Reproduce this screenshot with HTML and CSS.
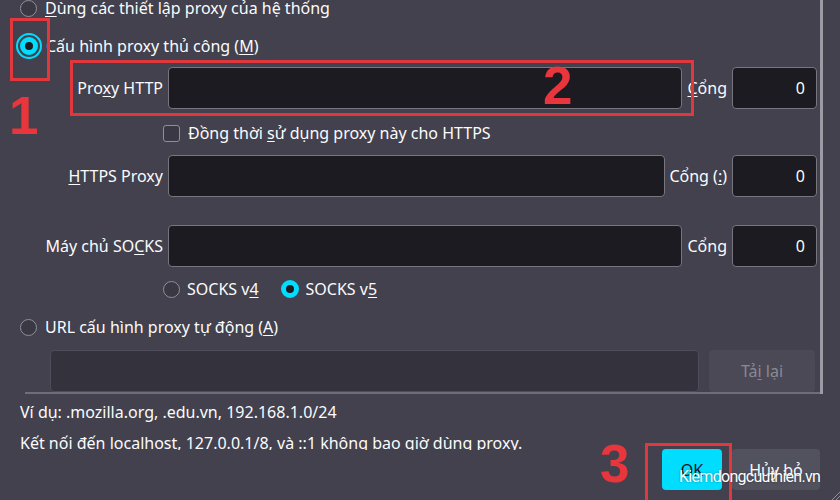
FILE: index.html
```html
<!DOCTYPE html>
<html lang="vi">
<head>
<meta charset="utf-8">
<title>Cài đặt proxy</title>
<link rel="stylesheet" href="styles.css">
</head>
<body>
<div class="dialog">
  <div class="scroll">
    <div class="panel">
      <div class="opt r1"><span class="radio"></span><span><u>D</u>ùng các thiết lập proxy của hệ thống</span></div>
      <div class="opt r2"><span class="radio checked focus"></span><span>Cấu hình proxy thủ công (<u>M</u>)</span></div>

      <div class="field r-http">
        <label class="lbl">Pro<u>x</u>y HTTP</label>
        <div class="input"></div>
        <label class="plbl"><u>C</u>ổng</label>
        <div class="input port">0</div>
      </div>

      <div class="opt r-check"><span class="check"></span><span>Đồng thời <u>s</u>ử dụng proxy này cho HTTPS</span></div>

      <div class="field r-https">
        <label class="lbl"><u>H</u>TTPS Proxy</label>
        <div class="input"></div>
        <label class="plbl">Cổng (<u>:</u>)</label>
        <div class="input port">0</div>
      </div>

      <div class="field r-socks">
        <label class="lbl">Máy chủ SO<u>C</u>KS</label>
        <div class="input"></div>
        <label class="plbl">Cổn<u>g</u></label>
        <div class="input port">0</div>
      </div>

      <div class="opt r-ver">
        <span class="radio"></span><span class="ver">SOCKS v<u>4</u></span>
        <span class="radio checked"></span><span>SOCKS v<u>5</u></span>
      </div>

      <div class="opt r-url"><span class="radio"></span><span>URL cấu hình proxy tự động (<u>A</u>)</span></div>

      <div class="r-urlinput">
        <div class="input disabled"></div>
        <button class="reload">Tả<u>i</u> lại</button>
      </div>
      <div class="divider"></div>
    </div>
    <p class="note n1">Ví dụ: .mozilla.org, .edu.vn, 192.168.1.0/24</p>
    <p class="note n2">Kết nối đến localhost, 127.0.0.1/8, và ::1 không bao giờ dùng proxy.</p>
  </div>
  <div class="footer">
    <button class="btn primary">OK</button>
    <button class="btn">Hủy bỏ</button>
  </div>

  <div class="mark box1"></div>
  <div class="mark box2"></div>
  <div class="mark box3"></div>
  <div class="num n-1">1</div>
  <div class="num n-2">2</div>
  <div class="num n-3">3</div>
  <div class="watermark">Kiemdongcuuthien.vn</div>
  <svg class="grip" width="8" height="10" viewBox="0 0 8 10"><path d="M8 2 L0 10 M8 6 L4 10" stroke="#8f8f9d" stroke-width="1"/></svg>
</div>
</body>
</html>
```

FILE: styles.css
```css
html, body {
  margin: 0;
  padding: 0;
}
body {
  background: #42414d;
  color: #fbfbfe;
  font-family: "Noto Sans", "Open Sans", sans-serif;
  font-size: 16px;
  width: 840px;
  height: 500px;
  overflow: hidden;
}
u { text-decoration: underline; text-underline-offset: 2px; }

.dialog {
  position: relative;
  width: 840px;
  height: 500px;
  overflow: hidden;
}
.scroll {
  height: 450px;
  overflow: hidden;
}
.panel {
  width: 823px;
  box-sizing: border-box;
  border-right: 3px solid #9c9ba4;
  margin-top: -4px;
}

.opt {
  display: flex;
  align-items: center;
  height: 24px;
  white-space: nowrap;
}
.r1, .r2, .r-url { padding-left: 20px; gap: 8px; }
.r2 { margin-top: 14px; }

.radio {
  flex: none;
  width: 17px;
  height: 17px;
  box-sizing: border-box;
  border-radius: 50%;
  border: 1px solid #8f8f9d;
  background: #3a3943;
}
.radio.checked {
  background: #1c1b22;
  border: 5px solid #00ddff;
  width: 18px;
  height: 18px;
}
.radio.focus {
  outline: 2px solid #00ddff;
  outline-offset: 2px;
}

.field {
  display: flex;
  align-items: center;
  gap: 5px;
  height: 42px;
  width: 817px;
}
.r-http { margin-top: 9px; }
.r-https { margin-top: 10px; }
.r-https .plbl { margin-left: -1px; }
.r-socks { margin-top: 28px; }

.lbl {
  width: 163px;
  flex: none;
  text-align: right;
  white-space: nowrap;
}
.plbl { flex: none; white-space: nowrap; }

.input {
  flex: 1;
  height: 42px;
  box-sizing: border-box;
  background: #1c1b22;
  border: 1px solid #77767f;
  border-radius: 4px;
}
.input.port {
  flex: none;
  width: 85px;
  text-align: right;
  padding-right: 11px;
  line-height: 40px;
}

.r-check { margin-top: 12px; padding-left: 163px; gap: 8px; }
.check {
  flex: none;
  width: 17px;
  height: 17px;
  box-sizing: border-box;
  border: 1px solid #8f8f9d;
  border-radius: 3px;
  background: #3a3943;
}

.r-ver { margin-top: 10px; padding-left: 163px; gap: 7px; }
.r-ver .ver { margin-right: 15px; }

.r-url { margin-top: 14px; }

.r-urlinput {
  display: flex;
  gap: 10px;
  margin-top: 11px;
  padding-left: 50px;
  width: 815px;
  box-sizing: border-box;
  height: 42px;
}
.input.disabled {
  background: #34323d;
  border-color: #4e4c58;
}
.reload {
  flex: none;
  width: 106px;
  height: 42px;
  border: none;
  border-radius: 4px;
  background: #4a4955;
  color: #8a8993;
  font-family: inherit;
  font-size: 16px;
  padding: 0;
}

.divider {
  margin-left: 25px;
  height: 2px;
  background: #6e6d78;
}

.note {
  margin: 0;
  padding-left: 20px;
  height: 22px;
  line-height: 22px;
  white-space: nowrap;
}
.n1 { margin-top: 7px; }
.n2 { margin-top: 9px; }

.footer {
  display: flex;
  justify-content: flex-end;
  gap: 10px;
  padding-right: 20px;
  margin-top: -1px;
}
.btn {
  height: 41px;
  border: none;
  border-radius: 4px;
  background: #52515e;
  color: #fbfbfe;
  font-family: inherit;
  font-size: 16px;
  padding: 0;
  width: 88px;
}
.btn.primary {
  background: #00ddff;
  color: #15141a;
  width: 60px;
}

.mark {
  position: absolute;
  border: 3px solid #e0383d;
  box-sizing: border-box;
}
.box1 { left: 10px; top: 18px; width: 40px; height: 63px; }
.box2 { left: 70px; top: 60px; width: 624px; height: 56px; }
.box3 { left: 645px; top: 443px; width: 87px; height: 62px; }

.num {
  position: absolute;
  color: #e8363c;
  font-family: "Liberation Sans", Arial, sans-serif;
  font-weight: bold;
  font-size: 53px;
  line-height: 1;
}
.n-1 { left: 9px; top: 89px; }
.n-2 { left: 543px; top: 59px; }
.n-3 { left: 600px; top: 437px; }

.watermark {
  position: absolute;
  left: 679px;
  top: 467px;
  font-family: Roboto, "Noto Sans", sans-serif;
  font-size: 16px;
  letter-spacing: -0.7px;
  color: #ffffff;
  text-shadow: 0 0 2px rgba(0,0,0,0.4);
  white-space: nowrap;
}
.grip {
  position: absolute;
  right: 0;
  bottom: 0;
}
```
